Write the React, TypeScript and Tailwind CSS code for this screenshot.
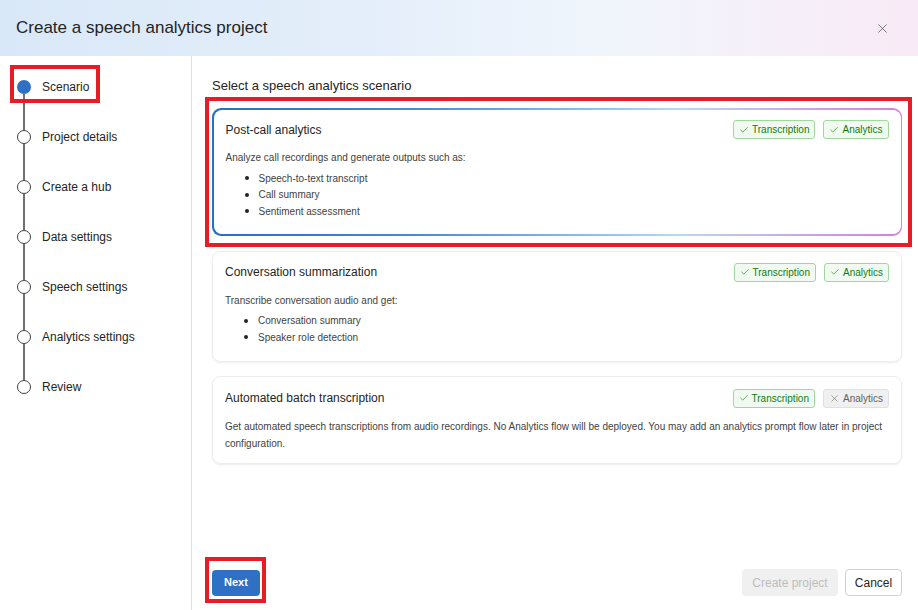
import { Check, X } from 'lucide-react';

const steps = [
  'Scenario',
  'Project details',
  'Create a hub',
  'Data settings',
  'Speech settings',
  'Analytics settings',
  'Review',
];

function Badge({ label, on }: { label: string; on: boolean }) {
  return (
    <span
      className={`flex items-center gap-[3px] h-[19px] px-[5px] rounded-[3px] border text-[10px] ${
        on
          ? 'border-[#9fd89f] bg-[#f1faf1] text-[#107c10]'
          : 'border-[#e0e0e0] bg-[#f0f0f0] text-[#616161]'
      }`}
    >
      {on ? <Check size={10} strokeWidth={1.5} /> : <X size={11} strokeWidth={1.2} />}
      {label}
    </span>
  );
}

function Bullets({ items }: { items: string[] }) {
  return (
    <div className="flex flex-col mt-[4px]">
      {items.map((t) => (
        <div key={t} className="flex items-center h-[16.5px] pl-[19px]">
          <span className="w-[4px] h-[4px] rounded-full bg-[#242424] mr-[10px]" />
          <span>{t}</span>
        </div>
      ))}
    </div>
  );
}

export default function App() {
  return (
    <div
      className="relative w-[918px] h-[610px] flex flex-col bg-white text-[#242424] overflow-hidden"
      style={{ fontFamily: '"Liberation Sans", Arial, sans-serif' }}
    >
      {/* header */}
      <div className="h-[56px] flex items-center justify-between px-4 bg-[linear-gradient(90deg,#d9e8f8_0%,#e4eefa_40%,#f0f5fc_65%,#f6eff9_85%,#f8eaf6_100%)]">
        <h1 className="text-[17px] text-[#242424]">Create a speech analytics project</h1>
        <button className="w-[24px] h-[24px] flex items-center justify-center mr-[8px] text-[#424242]">
          <X size={15} strokeWidth={1.1} />
        </button>
      </div>

      <div className="flex flex-1 min-h-0">
        {/* steps */}
        <div className="w-[192px] border-r border-[#e0e0e0] pt-[24px] pl-[17px]">
          {steps.map((s, i) => (
            <div key={s}>
              <div className="flex items-center h-[14px]">
                {i === 0 ? (
                  <span className="w-[14px] h-[14px] rounded-full bg-[#2f6fc4]" />
                ) : (
                  <span className="w-[14px] h-[14px] rounded-full border border-[#424242] bg-white" />
                )}
                <span className="ml-[11px] text-[12px] text-[#242424]">{s}</span>
              </div>
              {i < steps.length - 1 && <div className="w-[2px] h-[36px] ml-[6px] bg-[#707070]" />}
            </div>
          ))}
        </div>

        {/* main */}
        <div className="flex-1 flex flex-col pl-[20px] pr-[16px]">
          <h2 className="text-[13px] text-[#242424] mt-[21px] leading-[18px]">
            Select a speech analytics scenario
          </h2>

          <div className="mt-[13px] rounded-[9px] p-[1.5px] bg-[linear-gradient(90deg,#2b6cc4_0%,#4a8ad8_30%,#8cc0ec_55%,#b9d8f2_68%,#c7a8e6_85%,#d77fd7_100%)]">
            <div className="bg-white rounded-[8px] px-[12px] pt-[10.5px] pb-[14.5px] text-[10px] text-[#424242]">
              <div className="flex items-center justify-between h-[19px]">
                <span className="text-[12px] text-[#242424]">Post-call analytics</span>
                <div className="flex gap-[8px]">
                  <Badge label="Transcription" on />
                  <Badge label="Analytics" on />
                </div>
              </div>
              <p className="mt-[11px] leading-[16px]">Analyze call recordings and generate outputs such as:</p>
              <Bullets items={['Speech-to-text transcript', 'Call summary', 'Sentiment assessment']} />
            </div>
          </div>

          <div className="mt-[15px] rounded-[8px] border border-[#ededed] shadow-[0_1px_2px_rgba(0,0,0,0.08)] px-[12px] pt-[11px] pb-[15px] text-[10px] text-[#424242]">
            <div className="flex items-center justify-between h-[19px]">
              <span className="text-[12px] text-[#242424]">Conversation summarization</span>
              <div className="flex gap-[8px]">
                <Badge label="Transcription" on />
                <Badge label="Analytics" on />
              </div>
            </div>
            <p className="mt-[11px] leading-[16px]">Transcribe conversation audio and get:</p>
            <Bullets items={['Conversation summary', 'Speaker role detection']} />
          </div>

          <div className="mt-[14px] rounded-[8px] border border-[#ededed] shadow-[0_1px_2px_rgba(0,0,0,0.08)] px-[12px] pt-[12px] pb-[11px] text-[10px] text-[#424242]">
            <div className="flex items-center justify-between h-[19px]">
              <span className="text-[12px] text-[#242424]">Automated batch transcription</span>
              <div className="flex gap-[8px]">
                <Badge label="Transcription" on />
                <Badge label="Analytics" on={false} />
              </div>
            </div>
            <p className="mt-[10px] leading-[17px]">
              Get automated speech transcriptions from audio recordings. No Analytics flow will be deployed. You may add an
              analytics prompt flow later in project configuration.
            </p>
          </div>

          {/* footer */}
          <div className="mt-auto mb-[14px] flex items-center justify-between">
            <button className="h-[26px] px-[12px] rounded-[4px] bg-[#2f6fc4] text-white text-[11px] font-bold">
              Next
            </button>
            <div className="flex gap-[7px]">
              <button className="h-[27px] w-[96px] rounded-[4px] bg-[#f0f0f0] text-[#bdbdbd] text-[12px]">
                Create project
              </button>
              <button className="h-[27px] w-[57px] rounded-[4px] border border-[#d1d1d1] bg-white text-[#242424] text-[12px]">
                Cancel
              </button>
            </div>
          </div>
        </div>
      </div>

      {/* red annotation boxes */}
      <div className="absolute left-[10px] top-[65px] w-[90px] h-[38px] border-4 border-[#e81c24]" />
      <div className="absolute left-[205px] top-[97px] w-[707px] h-[150px] border-4 border-[#e81c24]" />
      <div className="absolute left-[205px] top-[557px] w-[61px] h-[46px] border-4 border-[#e81c24]" />
    </div>
  );
}
